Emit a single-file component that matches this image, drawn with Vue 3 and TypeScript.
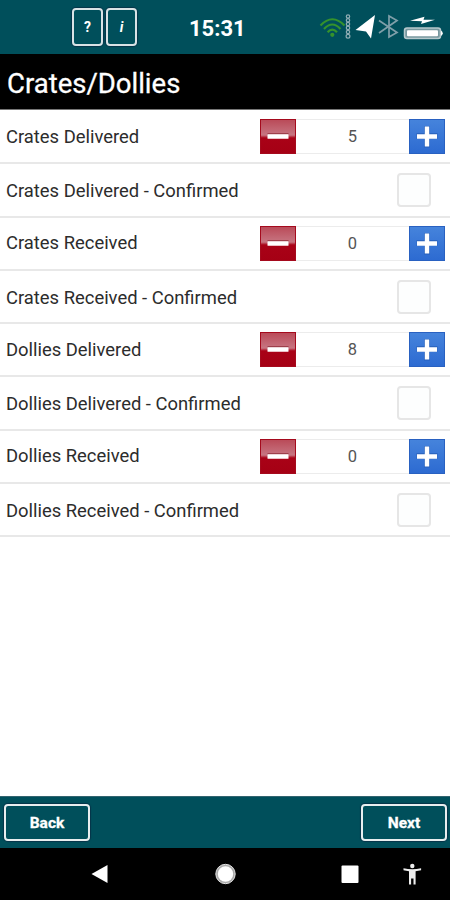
<script setup lang="ts">
import { ref } from 'vue'

interface CountRow {
  label: string
  count: number
  confirmed: boolean
}

const rows = ref<CountRow[]>([
  { label: 'Crates Delivered', count: 5, confirmed: false },
  { label: 'Crates Received', count: 0, confirmed: false },
  { label: 'Dollies Delivered', count: 8, confirmed: false },
  { label: 'Dollies Received', count: 0, confirmed: false },
])

function step(row: CountRow, delta: number): void {
  row.count = Math.max(0, row.count + delta)
}
</script>

<template>
  <div class="screen">
    <header class="status">
      <div class="helpers">
        <button class="key">?</button>
        <button class="key info">i</button>
      </div>
      <div class="clock">15:31</div>
      <svg class="indicators" width="126" height="32" viewBox="318 11 126 32">
        <g fill="none" stroke="#35922c" stroke-width="2.200">
          <path d="M320.500 25.500Q332.300 13 344.500 25.500" />
          <path d="M324 29Q332.300 20 340.500 29" />
          <path d="M327.600 32.300Q332.300 27 337 32.300" />
        </g>
        <circle cx="332.300" cy="34.800" r="2.100" fill="#35922c" />
        <g fill="none" stroke="#8fadb4" stroke-width="1.200">
          <circle cx="348" cy="16.500" r="1.700" />
          <circle cx="348" cy="20.300" r="1.700" />
          <circle cx="348" cy="24.100" r="1.700" />
          <circle cx="348" cy="27.900" r="1.700" />
          <circle cx="348" cy="32" r="1.700" />
          <circle cx="348" cy="36.300" r="1.900" />
        </g>
        <path d="M375 15L371 38.500L366 31.500L355.500 30Z" fill="#fff" />
        <path
          d="M379 20.500L397 32.500L389 37V16L397 20.500L379 33"
          fill="none"
          stroke="#7f9fa9"
          stroke-width="1.700"
        />
        <path d="M410 20.800L424.500 16.800L423.500 19.800H435L421 24L422 21.300Z" fill="#fff" />
        <rect x="404.500" y="28" width="36" height="10.500" rx="2.500" fill="#78989f" stroke="#b7c9cd" stroke-width="1.500" />
        <rect x="407" y="30.300" width="31" height="6" rx="1" fill="#fff" />
        <path d="M441 30.500Q444.500 33.200 441 36Z" fill="#fff" />
      </svg>
    </header>

    <h1 class="title">Crates/Dollies</h1>

    <main class="list">
      <template v-for="row in rows" :key="row.label">
        <div class="row">
          <span class="label">{{ row.label }}</span>
          <div class="stepper">
            <button class="step minus" @click="step(row, -1)">
              <svg width="36" height="35" viewBox="0 0 36 35">
                <path d="M7.500 14H28.500V15.500H7.500Z" fill="#6d0510" opacity=".45" />
                <rect x="7.500" y="15.300" width="21" height="4.400" rx=".5" fill="#fff" />
              </svg>
            </button>
            <span class="value">{{ row.count }}</span>
            <button class="step plus" @click="step(row, 1)">
              <svg width="36" height="35" viewBox="0 0 36 35">
                <path d="M18 7V28.500M7.500 17H28.500" stroke="#184b9e" stroke-width="6" opacity=".4" />
                <path d="M18 7.500V27.500M8 17.500H28" stroke="#fff" stroke-width="4.400" />
              </svg>
            </button>
          </div>
        </div>
        <div class="row confirm">
          <span class="label">{{ row.label }} - Confirmed</span>
          <input v-model="row.confirmed" class="check" type="checkbox" />
        </div>
      </template>
    </main>

    <footer class="actions">
      <button class="action">Back</button>
      <button class="action">Next</button>
    </footer>

    <nav class="navbar">
      <svg width="450" height="52" viewBox="0 848 450 52">
        <path d="M107.500 865V883L91.500 874Z" fill="#fff" />
        <circle cx="225.500" cy="874" r="9.700" fill="#aaa" stroke="#e4e4e4" stroke-width="1" />
        <circle cx="225.500" cy="874" r="7.700" fill="#fff" />
        <rect x="341.500" y="865.500" width="17" height="17.500" rx="1" fill="#fff" />
        <circle cx="412.300" cy="866" r="2.200" fill="#eee" />
        <path
          d="M403.500 868.300Q412.300 870.200 421.100 868.300V870.200L415.600 871.300V884.500H413.500V878.500H411.100V884.500H409V871.300L403.500 870.200Z"
          fill="#eee"
        />
      </svg>
    </nav>
  </div>
</template>

<style>
body {
  margin: 0;
}
</style>

<style scoped>
.screen {
  width: 450px;
  height: 900px;
  display: flex;
  flex-direction: column;
  background: #fff;
  font-family: Roboto, "Liberation Sans", sans-serif;
  overflow: hidden;
}

button {
  font-family: inherit;
  padding: 0;
}

.status {
  height: 54px;
  flex: none;
  display: flex;
  align-items: center;
  box-sizing: border-box;
  padding: 0 6px 0 72px;
  background: #004f5b;
  color: #fff;
}

.helpers {
  display: flex;
  gap: 3px;
}

.key {
  width: 31px;
  height: 38px;
  background: none;
  border: 2px solid #d9e2e5;
  border-radius: 4px;
  box-shadow: 0 0 1px 1px #063449;
  color: #fff;
  font-size: 14px;
  font-weight: 700;
}

.info {
  font-style: italic;
}

.clock {
  margin-left: 52px;
  padding-top: 2px;
  font-size: 22px;
  font-weight: 700;
}

.indicators {
  margin-left: auto;
}

.title {
  flex: none;
  height: 56px;
  box-sizing: border-box;
  margin: 0;
  padding: 2px 7px 0;
  border-bottom: 1px solid #777;
  background: #000;
  color: #fff;
  font-size: 27.500px;
  font-weight: 400;
  line-height: 55px;
  -webkit-text-stroke: 0.300px #fff;
}

.list {
  flex: 1;
  padding-top: 1px;
}

.row {
  height: 53.250px;
  box-sizing: border-box;
  display: flex;
  align-items: center;
  justify-content: space-between;
  padding: 0 5px 0 6px;
  border-bottom: 2px solid #e8e8e8;
}

.label {
  margin-top: -1px;
  font-size: 18.400px;
  color: #2c2c2c;
}

.confirm .label {
  margin-top: 2px;
}

.stepper {
  display: flex;
  width: 185px;
  height: 35px;
}

.step {
  width: 36px;
  height: 35px;
  flex: none;
  border: 0;
}

.step svg {
  display: block;
}

.minus {
  background: linear-gradient(#b94856 0, #c77581 46%, #a90217 54%, #a50014 100%);
  box-shadow: inset 0 0 0 1px #a50a1d;
}

.plus {
  background: linear-gradient(#4684dc, #2c6ad1);
  box-shadow: inset 0 0 0 1px #2961c1;
}

.value {
  flex: 1;
  box-sizing: border-box;
  border: solid #ececec;
  border-width: 1px 0;
  color: #555;
  font-size: 16.500px;
  line-height: 33px;
  text-align: center;
}

.check {
  appearance: none;
  width: 34px;
  height: 34px;
  margin: 1px 14px 0 0;
  border: 2px solid #e6e6e6;
  border-radius: 4px;
  background: #fdfefe;
}

.actions {
  flex: none;
  height: 52px;
  box-sizing: border-box;
  display: flex;
  justify-content: space-between;
  padding: 7px 3px 0 4px;
  border-top: 1px solid #33646f;
  background: #004f5b;
}

.action {
  width: 86px;
  height: 37px;
  border: 2px solid #e8eeef;
  border-radius: 4px;
  background: none;
  box-shadow: 0 0 1px 1px #063449;
  color: #fff;
  font-size: 15.500px;
  font-weight: 700;
  -webkit-text-stroke: 0.300px #fff;
}

.navbar {
  flex: none;
  height: 52px;
  background: #000;
}

.navbar svg {
  display: block;
}
</style>
